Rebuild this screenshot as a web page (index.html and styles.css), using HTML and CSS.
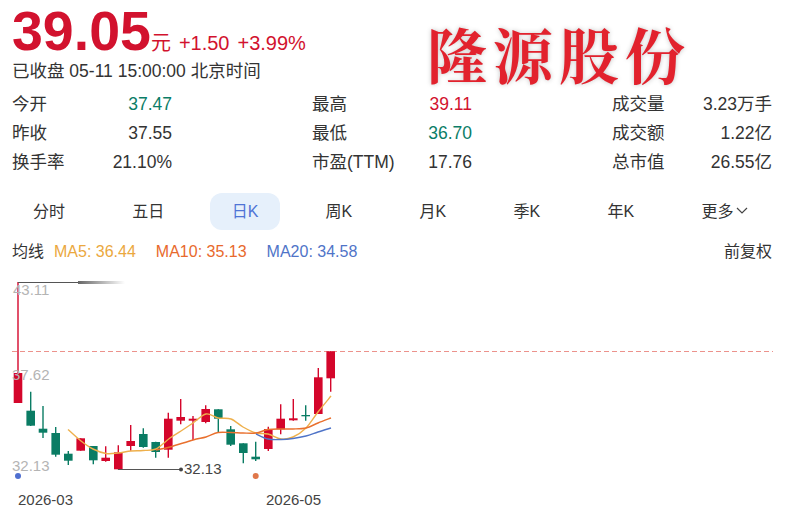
FILE: index.html
```html
<!DOCTYPE html>
<html lang="zh-CN">
<head>
    <meta charset="UTF-8">
    <meta name="viewport" content="width=device-width, initial-scale=1.0">
    <title>隆源股份</title>
    <link rel="stylesheet" href="styles.css">
</head>
<body>
    <div class="container">
        <!-- Price -->
        <header class="quote">
            <div class="price-row">
                <span class="price">39.05</span>
                <span class="unit">元</span>
                <span class="change">+1.50</span>
                <span class="change">+3.99%</span>
            </div>
            <div class="status">已收盘 05-11 15:00:00 北京时间</div>
        </header>

        <h1 class="stock-name">隆源股份</h1>

        <!-- Stats -->
        <div class="stats">
            <div class="stat-group">
                <div class="stat"><span>今开</span><span class="fall">37.47</span></div>
                <div class="stat"><span>昨收</span><span>37.55</span></div>
                <div class="stat"><span>换手率</span><span>21.10%</span></div>
            </div>
            <div class="stat-group">
                <div class="stat"><span>最高</span><span class="rise">39.11</span></div>
                <div class="stat"><span>最低</span><span class="fall">36.70</span></div>
                <div class="stat"><span>市盈(TTM)</span><span>17.76</span></div>
            </div>
            <div class="stat-group">
                <div class="stat"><span>成交量</span><span>3.23万手</span></div>
                <div class="stat"><span>成交额</span><span>1.22亿</span></div>
                <div class="stat"><span>总市值</span><span>26.55亿</span></div>
            </div>
        </div>

        <!-- Period tabs -->
        <nav class="tabs">
            <div class="tab">分时</div>
            <div class="tab">五日</div>
            <div class="tab active">日K</div>
            <div class="tab">周K</div>
            <div class="tab">月K</div>
            <div class="tab">季K</div>
            <div class="tab">年K</div>
            <div class="tab">更多<svg class="chevron" viewBox="0 0 12 7" width="12" height="7"><path d="M1 1l5 5 5-5" fill="none" stroke="#444" stroke-width="1.2"/></svg></div>
        </nav>

        <!-- Moving averages -->
        <div class="ma-row">
            <span>均线</span>
            <span class="ma5">MA5: 36.44</span>
            <span class="ma10">MA10: 35.13</span>
            <span class="ma20">MA20: 34.58</span>
            <span class="adjust">前复权</span>
        </div>

        <svg class="chart" id="chart" viewBox="0 0 803 254" width="803" height="254"></svg>
    </div>

    <script src="chart.js"></script>
</body>
</html>
```

FILE: styles.css
```css
:root {
    --rise: #d2122e;
    --fall: #0b7d67;
    --text: #333;
}

* {
    margin: 0;
    padding: 0;
    box-sizing: border-box;
    font-family: "Liberation Sans", "Noto Sans CJK SC", sans-serif;
}

body {
    background: white;
    color: var(--text);
    overflow: hidden;
}

.container {
    position: relative;
    width: 803px;
    height: 524px;
}

/* Price */
.quote {
    padding: 0 0 0 12px;
    height: 90px;
}

.price-row {
    display: flex;
    align-items: baseline;
    height: 59px;
    color: var(--rise);
    font-size: 20px;
}

.price {
    font-size: 55.5px;
    font-weight: bold;
    line-height: 62px;
}

.unit {
    margin-right: 8px;
}

.change {
    margin-right: 8px;
}

.status {
    font-size: 17.5px;
    line-height: 24px;
}

.stock-name {
    position: absolute;
    left: 427px;
    top: 21px;
    font-size: 60px;
    line-height: 64px;
    letter-spacing: 6px;
    font-weight: 700;
    color: #e2222d;
    font-family: "Noto Serif CJK SC", "Noto Sans CJK SC", serif;
    text-shadow: 0 0 1px #ddd, 0 0 5px #c4c4c4;
}

/* Stats */
.stats {
    display: grid;
    grid-template-columns: repeat(3, 300px);
    padding-left: 12px;
}

.stat-group {
    width: 160px;
}

.stat {
    display: flex;
    justify-content: space-between;
    font-size: 17.5px;
    line-height: 29px;
}

.rise { color: var(--rise); }
.fall { color: var(--fall); }

/* Tabs */
.tabs {
    display: flex;
    gap: 23.3px;
    margin-top: 16px;
    padding-left: 11px;
}

.tab {
    display: flex;
    align-items: center;
    height: 37px;
    padding: 0 22px 3px;
    border-radius: 12px;
    font-size: 16px;
}

.tab.active {
    background: #e6f0fb;
    color: #4f74d6;
}

.chevron {
    margin-left: 2px;
    margin-top: 1px;
}

/* Moving averages */
.ma-row {
    display: flex;
    gap: 10px;
    margin-top: 4px;
    padding: 0 31px 0 12px;
    font-size: 16px;
    line-height: 36px;
}

.ma5 { color: #eba83e; }
.ma10 { color: #e8692c; margin-left: 10px; }
.ma20 { color: #4f74c8; margin-left: 10px; }

.adjust {
    margin-left: auto;
}

.chart {
    display: block;
}

.axis-label {
    font-size: 15px;
    fill: #b4b4b4;
}

.date-label {
    font-size: 15px;
    fill: #444;
}
```

FILE: chart.js
```js
// y values below are page coordinates, the svg starts at CHART_TOP
const CHART_TOP = 270;

// x, wick top, wick bottom, body top, body bottom, rising
const candles = [
    [18, 282, 403, 373, 403, true],
    [30.7, 391.7, 426, 410.7, 425.7, false],
    [43, 406, 438, 428.7, 432.7, false],
    [55.7, 427, 456.7, 433, 454.7, false],
    [68.3, 451, 465, 453.7, 460.7, false],
    [80.7, 438.3, 450.7, 438.3, 450.7, true],
    [93.3, 446, 464.3, 446, 460.3, false],
    [105.7, 446.3, 461.7, 457.7, 461, true],
    [118.3, 445.3, 469.3, 452.3, 469.3, true],
    [130.7, 425, 450.7, 441, 446, true],
    [143.3, 428.3, 447.7, 434, 447, false],
    [155.7, 441.7, 457.7, 442, 452, false],
    [168.3, 412.7, 457.7, 418.7, 449.7, true],
    [180.7, 399, 424.3, 417, 420.7, true],
    [193, 416, 440, 418.7, 420.7, true],
    [205.7, 405.3, 423.3, 409, 422, true],
    [218.3, 409.3, 432.3, 409.3, 418.7, false],
    [230.7, 426, 446, 429.3, 444.7, false],
    [243.3, 443.3, 463.3, 443.3, 453, false],
    [255.7, 441.7, 461, 456.7, 459.3, false],
    [268.3, 426.7, 451, 429, 449, true],
    [280.7, 404.3, 434.3, 418.7, 429.3, true],
    [293.3, 399, 420.7, 418.3, 420.3, true],
    [305.7, 405.3, 420.7, 415, 416.3, false],
    [318.3, 368, 414, 377.3, 414, true],
    [330.7, 351.3, 391.7, 351.3, 378.3, true]
];

const lines = {
    '#eeb04c': [[68, 429.5], [81, 441], [93, 449], [106, 453.5], [118, 453], [131, 451], [143, 450.5], [156, 449], [170, 438], [181, 431], [193, 423], [206, 414], [218, 418], [231, 419], [243, 427], [256, 433], [268, 434], [281, 439], [293, 437], [306, 428], [318, 412], [331, 396]],
    '#e9702e': [[156, 450], [170, 447], [193, 440], [206, 437], [218, 432.5], [231, 432.5], [243, 433], [256, 433], [268, 429.5], [281, 429], [293, 429], [306, 428], [318, 423], [331, 418]],
    '#4f74c8': [[256, 434], [268, 439], [281, 439.5], [293, 438.5], [306, 436], [318, 432], [331, 428]]
};

const NS = 'http://www.w3.org/2000/svg';
const chart = document.getElementById('chart');

function add(tag, attrs, text) {
    const el = document.createElementNS(NS, tag);
    Object.keys(attrs).forEach(key => el.setAttribute(key, attrs[key]));
    if (text) el.textContent = text;
    chart.appendChild(el);
    return el;
}

// Catmull-Rom through the points, so the averages come out as curves
function smoothPath(points) {
    const pts = points.map(([x, y]) => [x, y - CHART_TOP]);
    let d = 'M' + pts[0].join(' ');
    for (let i = 0; i < pts.length - 1; i++) {
        const p0 = pts[i - 1] || pts[i];
        const p1 = pts[i];
        const p2 = pts[i + 1];
        const p3 = pts[i + 2] || p2;
        const c1 = [p1[0] + (p2[0] - p0[0]) / 6, p1[1] + (p2[1] - p0[1]) / 6];
        const c2 = [p2[0] - (p3[0] - p1[0]) / 6, p2[1] - (p3[1] - p1[1]) / 6];
        d += 'C' + c1.join(' ') + ' ' + c2.join(' ') + ' ' + p2.join(' ');
    }
    return d;
}

const defs = add('defs', {});
defs.innerHTML = '<linearGradient id="fade"><stop offset="0" stop-color="#666"/><stop offset="1" stop-color="#fff"/></linearGradient>';

// Close price line
add('line', { x1: 12, x2: 773, y1: 351.5 - CHART_TOP, y2: 351.5 - CHART_TOP, stroke: '#ec928c', 'stroke-dasharray': '5 3' });

candles.forEach(([x, wickTop, wickBottom, bodyTop, bodyBottom, rising]) => {
    const color = rising ? '#d4062b' : '#0a7c64';
    add('line', { x1: x, x2: x, y1: wickTop - CHART_TOP, y2: wickBottom - CHART_TOP, stroke: color, 'stroke-width': 1.4 });
    add('rect', { x: x - 4.3, y: bodyTop - CHART_TOP, width: 8.6, height: bodyBottom - bodyTop, fill: color });
});

Object.keys(lines).forEach(color => {
    add('path', { d: smoothPath(lines[color]), fill: 'none', stroke: color, 'stroke-width': 1.4 });
});

// High and low markers
add('line', { x1: 18, x2: 80, y1: 12.5, y2: 12.5, stroke: '#555' });
add('rect', { x: 78, y: 11, width: 47, height: 3, fill: 'url(#fade)' });
add('line', { x1: 118, x2: 181, y1: 199.5, y2: 199.5, stroke: '#555' });
add('circle', { cx: 181, cy: 199.5, r: 2, fill: '#444' });
add('text', { x: 184, y: 203.5, class: 'date-label' }, '32.13');

add('text', { x: 13, y: 25, class: 'axis-label' }, '43.11');
add('text', { x: 12, y: 110, class: 'axis-label' }, '37.62');
add('text', { x: 12, y: 201, class: 'axis-label' }, '32.13');

add('circle', { cx: 18, cy: 206, r: 3, fill: '#4f6fd0' });
add('circle', { cx: 255.7, cy: 206, r: 3, fill: '#e0774a' });

add('text', { x: 18, y: 235, class: 'date-label' }, '2026-03');
add('text', { x: 266, y: 235, class: 'date-label' }, '2026-05');
```
